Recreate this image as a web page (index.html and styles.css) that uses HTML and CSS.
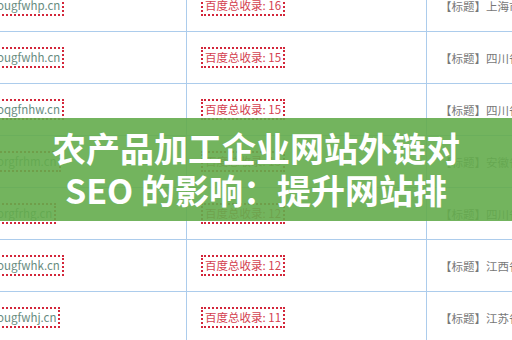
FILE: index.html
```html
<!DOCTYPE html>
<html lang="zh-CN">
<head>
<meta charset="utf-8">
<title>农产品加工企业网站外链对 SEO 的影响</title>
<link rel="stylesheet" href="styles.css">
</head>
<body>
<div class="page">
  <div class="list">
    <div class="row"><div class="cell c1"><span class="url">ougfwhp.cn</span></div><div class="cell c2"><span class="count">百度总收录: 16</span></div><div class="cell c3">【标题】上海市农产品</div></div>
    <div class="row"><div class="cell c1"><span class="url">ougfwhh.cn</span></div><div class="cell c2"><span class="count">百度总收录: 15</span></div><div class="cell c3">【标题】四川省农产品</div></div>
    <div class="row"><div class="cell c1"><span class="url">oqgfnhw.cn</span></div><div class="cell c2"><span class="count">百度总收录: 15</span></div><div class="cell c3">【标题】四川省农产品</div></div>
    <div class="row"><div class="cell c1"><span class="url">orgfrhm.cn</span></div><div class="cell c2"><span class="count">百度总收录: 13</span></div><div class="cell c3">【标题】安徽省农产品</div></div>
    <div class="row"><div class="cell c1"><span class="url">orgfrhg.cn</span></div><div class="cell c2"><span class="count">百度总收录: 12</span></div><div class="cell c3">【标题】四川省农产品</div></div>
    <div class="row"><div class="cell c1"><span class="url">ougfwhk.cn</span></div><div class="cell c2"><span class="count">百度总收录: 12</span></div><div class="cell c3">【标题】江西省农产品</div></div>
    <div class="row"><div class="cell c1"><span class="url">ougfwhj.cn</span></div><div class="cell c2"><span class="count">百度总收录: 11</span></div><div class="cell c3">【标题】江苏省农产品</div></div>
  </div>
  <div class="banner">
    <h1 class="title">农产品加工企业网站外链对 SEO 的影响：提升网站排名的关键策略</h1>
  </div>
</div>
</body>
</html>
```
FILE: styles.css
```css
html, body {
  margin: 0;
  padding: 0;
  background: #fff;
}
body {
  width: 512px;
  height: 340px;
  overflow: hidden;
  font-family: "Noto Sans CJK SC", "Noto Sans", sans-serif;
}
.page {
  position: relative;
  width: 512px;
  height: 340px;
  overflow: hidden;
}
.list {
  margin-top: -20px;
  margin-left: -21px;
  width: 560px;
}
.row {
  display: grid;
  grid-template-columns: 207px 240px 1fr;
  height: 52px;
  box-sizing: border-box;
  border-bottom: 1px solid #acccec;
}
.cell {
  display: flex;
  align-items: center;
  padding-left: 14px;
  white-space: nowrap;
  overflow: hidden;
  font-size: 11.5px;
}
.c2, .c3 {
  border-left: 1px solid #acccec;
}
.c3 {
  color: #777;
  padding-left: 13px;
}
.url, .count {
  display: inline-block;
  line-height: 15px;
  padding: 1px 2px;
  border: 2px dotted #d3263a;
}
.url {
  color: #688c80;
}
.count {
  color: #d4414f;
}
.banner {
  position: absolute;
  left: 0;
  right: 0;
  top: 118px;
  height: 103px;
  box-sizing: border-box;
  padding-top: 9px;
  background: rgba(100, 172, 76, 0.9);
  display: flex;
  justify-content: center;
}
.title {
  margin: 0;
  width: 408px;
  max-height: 84px;
  overflow: hidden;
  color: #fff;
  font-size: 34px;
  line-height: 42px;
  font-weight: 700;
  text-align: center;
}
```
